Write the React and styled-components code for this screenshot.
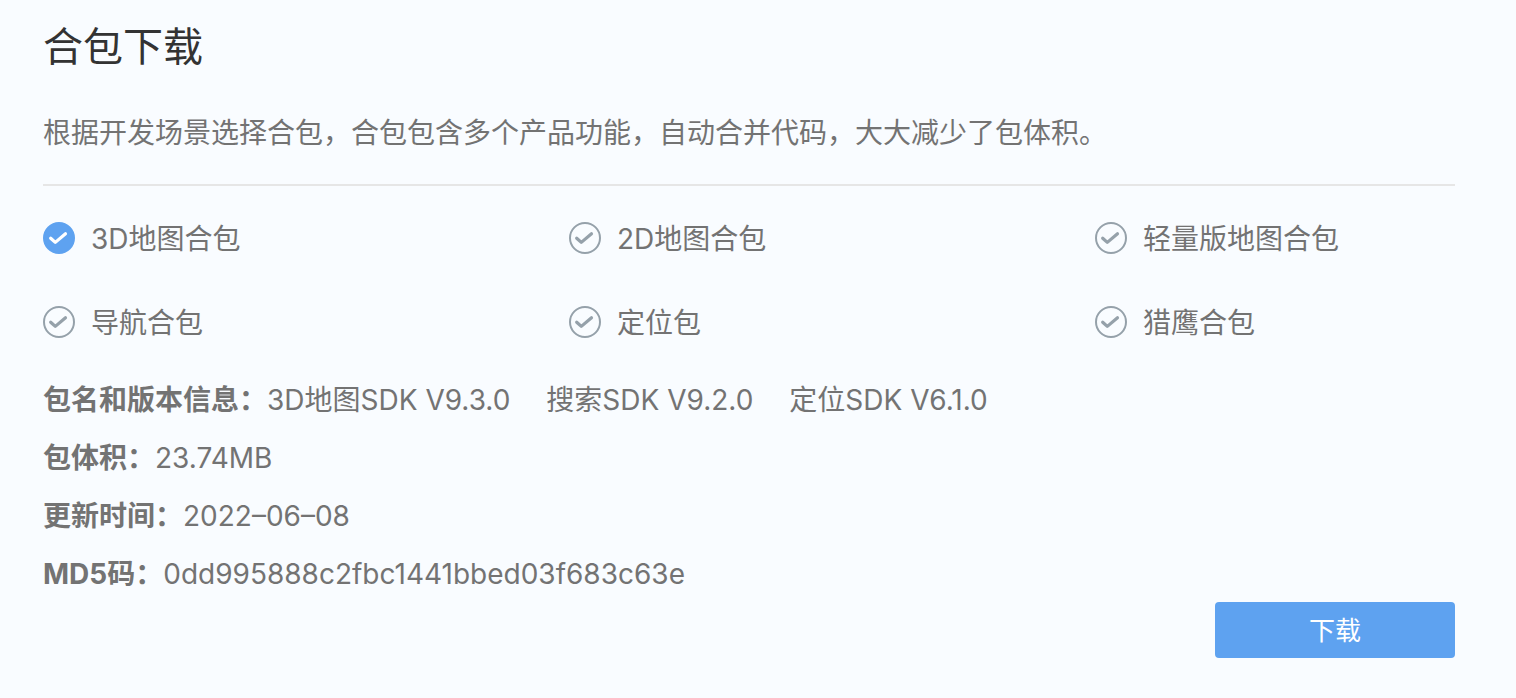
import React, { useState } from "react";
import styled, { createGlobalStyle } from "styled-components";

const GlobalStyle = createGlobalStyle`
  *, *::before, *::after { box-sizing: border-box; }
  html { background: #f9fcff; }
  body {
    margin: 0;
    color: #737373;
    font-family: Inter, "Noto Sans CJK SC", sans-serif;
    font-size: 28px;
    line-height: 40px;
    font-weight: 400;
  }
`;

const Card = styled.form`
  display: flex;
  flex-direction: column;
  padding: 17px 61px 40px 43px;
`;

const Title = styled.h1`
  margin: 0;
  color: #333333;
  font-size: 40px;
  line-height: 60px;
  font-weight: 400;
`;

const Intro = styled.p`
  margin: 36px 0 0;
  padding-bottom: 31px;
  border-bottom: 2px solid #e6e6e6;
`;

const Options = styled.fieldset`
  display: grid;
  grid-template-columns: repeat(2, 526fr) 360fr;
  row-gap: 42px;
  margin: 0;
  padding: 31px 0 0;
  border: 0;
`;

const Option = styled.label`
  display: flex;
  align-items: center;
  gap: 16px;
  cursor: pointer;
`;

const OptionName = styled.span`
  padding-top: 2px;
`;

const Radio = styled.input`
  position: absolute;
  opacity: 0;
  width: 32px;
  height: 32px;
  margin: 0;
`;

const Mark = styled.svg`
  flex: none;
  width: 32px;
  height: 32px;
  fill: ${(p) => (p.$on ? "#5ea2f0" : "none")};
  stroke: ${(p) => (p.$on ? "#5ea2f0" : "#95a1aa")};
`;

const Details = styled.dl`
  display: flex;
  flex-direction: column;
  gap: 18px;
  margin: 37px 0 0;
`;

const Detail = styled.div`
  display: flex;
`;

const Term = styled.dt`
  font-weight: 700;
`;

const Value = styled.dd`
  display: flex;
  gap: 36px;
  margin: 0;
`;

const Download = styled.button`
  align-self: flex-end;
  width: 240px;
  height: 56px;
  margin-top: 8px;
  padding: 2px 0 0;
  border: 0;
  border-radius: 4px;
  background: #5ea2f0;
  color: #ffffff;
  font: inherit;
  font-size: 26px;
  cursor: pointer;
`;

const packages = ["3D地图合包", "2D地图合包", "轻量版地图合包", "导航合包", "定位包", "猎鹰合包"];

const details = [
  ["包名和版本信息：", ["3D地图SDK V9.3.0", "搜索SDK V9.2.0", "定位SDK V6.1.0"]],
  ["包体积：", ["23.74MB"]],
  ["更新时间：", ["2022–06–08"]],
  ["MD5码：", ["0dd995888c2fbc1441bbed03f683c63e"]],
];

function CheckMark({ on }) {
  return (
    <Mark $on={on} viewBox="0 0 32 32" aria-hidden="true">
      <circle cx="16" cy="16" r="15" strokeWidth="2" />
      <path
        d="M7.7 16.2 12.3 20.4 22.5 11.7"
        fill="none"
        stroke={on ? "#ffffff" : undefined}
        strokeWidth="3.2"
        strokeLinecap="round"
        strokeLinejoin="round"
      />
    </Mark>
  );
}

export default function App() {
  const [selected, setSelected] = useState(packages[0]);
  return (
    <>
      <GlobalStyle />
      <Card onSubmit={(e) => e.preventDefault()}>
        <Title>合包下载</Title>
        <Intro>根据开发场景选择合包，合包包含多个产品功能，自动合并代码，大大减少了包体积。</Intro>
        <Options aria-label="合包">
          {packages.map((name) => (
            <Option key={name}>
              <Radio type="radio" name="package" checked={selected === name} onChange={() => setSelected(name)} />
              <CheckMark on={selected === name} />
              <OptionName>{name}</OptionName>
            </Option>
          ))}
        </Options>
        <Details>
          {details.map(([term, values]) => (
            <Detail key={term}>
              <Term>{term}</Term>
              <Value>
                {values.map((value) => (
                  <span key={value}>{value}</span>
                ))}
              </Value>
            </Detail>
          ))}
        </Details>
        <Download type="submit">下载</Download>
      </Card>
    </>
  );
}
